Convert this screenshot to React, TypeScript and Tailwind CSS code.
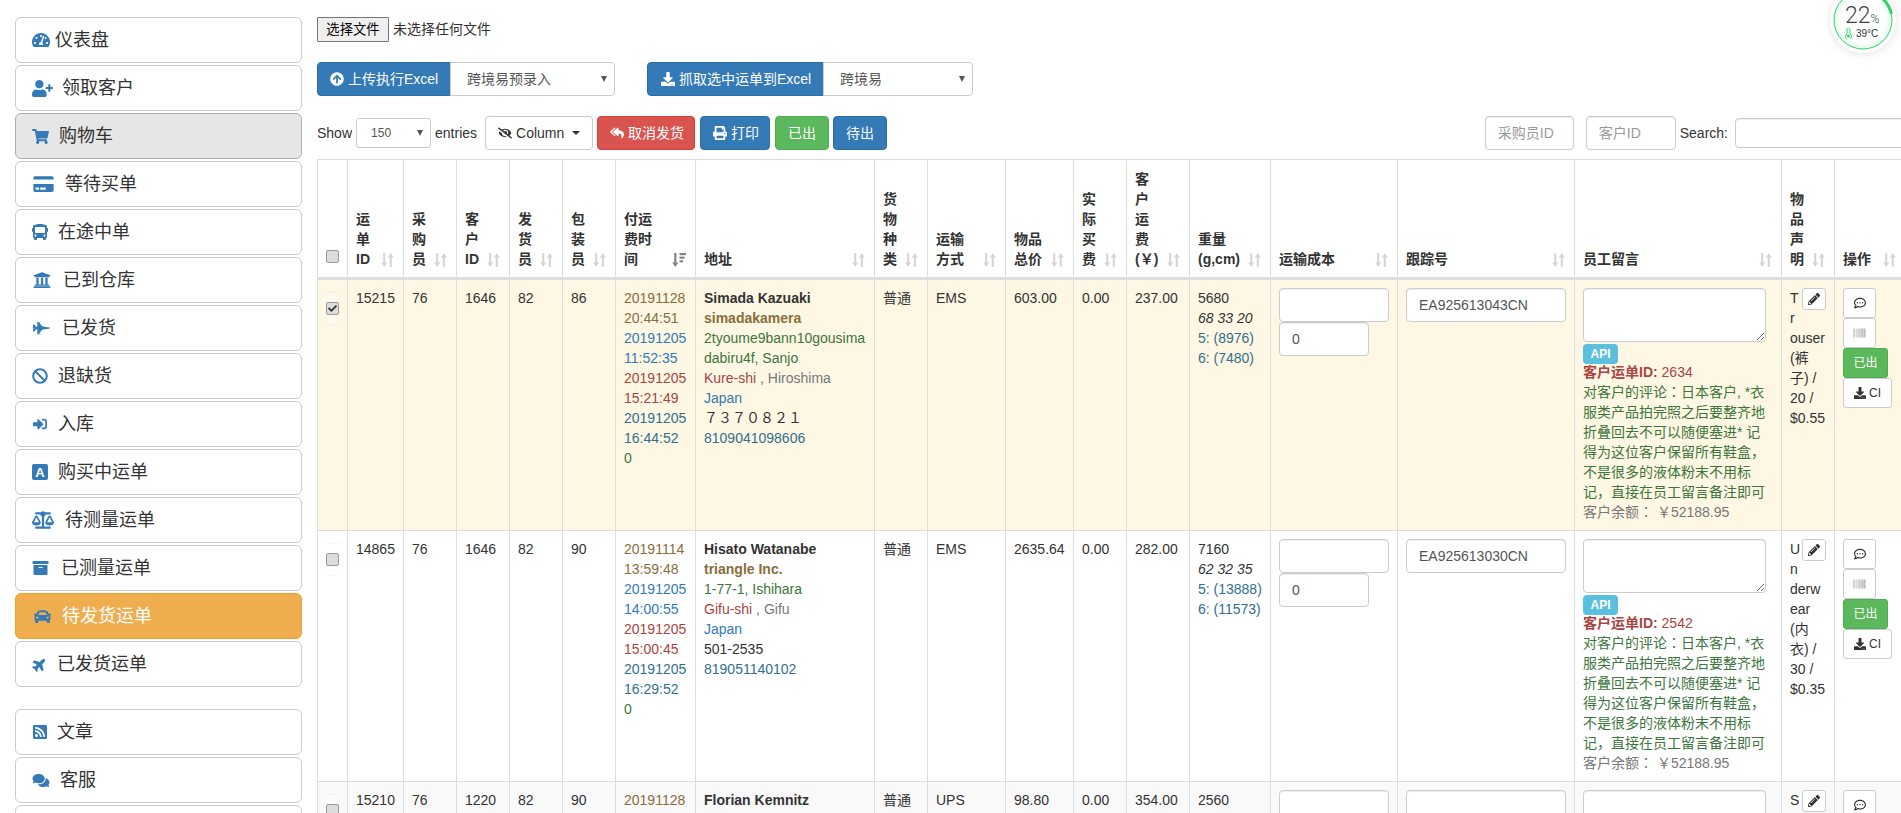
import React from 'react';
import {
  FaArchive, FaArrowCircleUp, FaBalanceScale, FaBan, FaBarcode, FaBus, FaCar, FaCheck, FaComments,
  FaCreditCard, FaDownload, FaEyeSlash, FaFighterJet, FaPencilAlt, FaPlane, FaPrint, FaRegCommentDots,
  FaReplyAll, FaRssSquare, FaShoppingCart, FaSignInAlt, FaTachometerAlt, FaUniversity, FaUserPlus,
} from 'react-icons/fa';

const LetterA: React.FC<{ className?: string }> = ({ className }) => (
  <svg viewBox="0 0 16 16" className={className}>
    <rect x="0" y="0" width="16" height="16" rx="2" fill="currentColor" />
    <text x="8" y="13" textAnchor="middle" fontSize="13" fontWeight="700" fill="#fff">A</text>
  </svg>
);

const menu = [
  { label: '仪表盘', Icon: FaTachometerAlt, size: 'w-[18px] h-[16px]', slot: 'w-[23px]' },
  { label: '领取客户', Icon: FaUserPlus, size: 'w-[21px] h-[17px]', slot: 'w-[30px]' },
  { label: '购物车', Icon: FaShoppingCart, size: 'w-[17px] h-[15px]', slot: 'w-[27px]', active: true },
  { label: '等待买单', Icon: FaCreditCard, size: 'w-[23px] h-[18px]', slot: 'w-[33px]' },
  { label: '在途中单', Icon: FaBus, size: 'w-[16px] h-[18px]', slot: 'w-[26px]' },
  { label: '已到仓库', Icon: FaUniversity, size: 'w-[20px] h-[18px]', slot: 'w-[31px]' },
  { label: '已发货', Icon: FaFighterJet, size: 'w-[19px] h-[14px]', slot: 'w-[30px]' },
  { label: '退缺货', Icon: FaBan, size: 'w-[16px] h-[16px]', slot: 'w-[26px]' },
  { label: '入库', Icon: FaSignInAlt, size: 'w-[16px] h-[14px]', slot: 'w-[26px]' },
  { label: '购买中运单', Icon: LetterA, size: 'w-[16px] h-[16px]', slot: 'w-[26px]' },
  { label: '待测量运单', Icon: FaBalanceScale, size: 'w-[22px] h-[18px]', slot: 'w-[33px]' },
  { label: '已测量运单', Icon: FaArchive, size: 'w-[17px] h-[16px]', slot: 'w-[29px]' },
  { label: '待发货运单', Icon: FaCar, size: 'w-[21px] h-[17px]', slot: 'w-[30px]', warning: true },
  { label: '已发货运单', Icon: FaPlane, size: 'w-[15px] h-[15px] -rotate-45', slot: 'w-[25px]' },
];

const menu2 = [
  { label: '文章', Icon: FaRssSquare, size: 'w-[16px] h-[16px]', slot: 'w-[25px]' },
  { label: '客服', Icon: FaComments, size: 'w-[18px] h-[15px]', slot: 'w-[28px]' },
  { label: '', Icon: null, size: '', slot: '' },
];

type MenuItem = { label: string; Icon: any; size: string; slot: string; active?: boolean; warning?: boolean };

const SideButton: React.FC<{ item: MenuItem }> = ({ item }) => {
  const { Icon } = item;
  return (
    <a
      className={`flex items-center h-[46px] mb-[2px] pl-[16px] border rounded-[6px] text-[18px] ${
        item.warning
          ? 'bg-[#f0ad4e] border-[#eea236] text-white'
          : item.active
          ? 'bg-[#e6e6e6] border-[#adadad] text-[#333]'
          : 'bg-white border-[#ccc] text-[#333]'
      }`}
    >
      {Icon && (
        <span className={`${item.slot} shrink-0 text-[#337ab7]`}>
          <Icon className={`${item.size} block`} />
        </span>
      )}
      {item.label}
    </a>
  );
};

const SelectBox: React.FC<{ text: string; className: string }> = ({ text, className }) => (
  <div className={`relative flex items-center bg-white border border-[#ccc] text-[#555] ${className}`}>
    {text}
    <span className="absolute top-1/2 -translate-y-1/2 right-[7px] border-x-[3px] border-t-[6px] border-x-transparent border-t-[#555]" />
  </div>
);

const btnBase = 'flex items-center h-[34px] border rounded-[4px] text-[14px]';
const blueBtn = `${btnBase} bg-[#337ab7] border-[#2e6da4] text-white`;

const SortIcon: React.FC<{ sorted?: boolean }> = ({ sorted }) => (
  <span className={`absolute right-[9px] bottom-[10px] ${sorted ? 'opacity-60' : 'opacity-20'}`}>
    {sorted ? (
      <svg width="14" height="14" viewBox="0 0 14 14" fill="#333" className="block">
        <path d="M2.2 0h2.2v9.5h2L3.3 14 .2 9.5h2z" />
        <rect x="7.5" y="0" width="6.5" height="2.2" />
        <rect x="7.5" y="3.6" width="5" height="2.2" />
        <rect x="7.5" y="7.2" width="3.4" height="2.2" />
      </svg>
    ) : (
      <svg width="13" height="14" viewBox="0 0 13 14" fill="#333" className="block">
        <path d="M2.2 0h2v9.5h2L3.2 14 .2 9.5h2z" />
        <path d="M8.8 14h2V4.5h2L9.8 0 6.8 4.5h2z" />
      </svg>
    )}
  </span>
);

const colWidths = [
  'w-[30px]', 'w-[56px]', 'w-[53px]', 'w-[53px]', 'w-[53px]', 'w-[53px]', 'w-[80px]', 'w-[179px]', 'w-[53px]', 'w-[78px]',
  'w-[68px]', 'w-[53px]', 'w-[63px]', 'w-[81px]', 'w-[127px]', 'w-[177px]', 'w-[207px]', 'w-[53px]', 'w-[71px]',
];

const headers = [
  '运单ID', '采购员', '客户ID', '发货员', '包装员', '付运费时间', '地址', '货物种类', '运输方式', '物品总价', '实际买费',
  '客户运费(￥)', '重量 (g,cm)', '运输成本', '跟踪号', '员工留言', '物品声明', '操作',
];

const Checkbox: React.FC<{ checked?: boolean; className?: string }> = ({ checked, className }) => (
  <span className={`flex items-center justify-center w-[13px] h-[13px] rounded-[2px] border border-[#9a9a9a] bg-[#dcdcdc] ${className ?? ''}`}>
    {checked && <FaCheck className="w-[9px] h-[9px] text-[#333]" />}
  </span>
);

const RowCheck: React.FC<{ checked?: boolean }> = ({ checked }) => (
  <div className="flex items-center h-[33px] mt-[4px] w-[13px] bg-white/30 border-y border-[#ddd]/30">
    <Checkbox checked={checked} />
  </div>
);

const orders = [
  {
    id: '15215', buyer: '76', customer: '1646', sender: '82', packer: '86', checked: true,
    bg: 'bg-[#fdf7e3]',
    t1: ['20191128', '20:44:51'], t2: ['20191205', '11:52:35'], t3: ['20191205', '15:21:49'], t4: ['20191205', '16:44:52'],
    name: 'Simada Kazuaki', company: 'simadakamera', addr: '2tyoume9bann10gousimadabiru4f, Sanjo',
    city: 'Kure-shi', state: ' , Hiroshima', zip: '７３７０８２１', phone: '8109041098606',
    kind: '普通', ship: 'EMS', total: '603.00', paid: '0.00', fee: '237.00',
    weight: '5680', dims: '68 33 20', w5: '5: (8976)', w6: '6: (7480)',
    track: 'EA925613043CN', cid: '2634', goods: 'Trouser(裤子) / 20 / $0.55',
  },
  {
    id: '14865', buyer: '76', customer: '1646', sender: '82', packer: '90', checked: false,
    bg: 'bg-white',
    t1: ['20191114', '13:59:48'], t2: ['20191205', '14:00:55'], t3: ['20191205', '15:00:45'], t4: ['20191205', '16:29:52'],
    name: 'Hisato Watanabe', company: 'triangle Inc.', addr: '1-77-1, Ishihara',
    city: 'Gifu-shi', state: ' , Gifu', zip: '501-2535', phone: '819051140102',
    kind: '普通', ship: 'EMS', total: '2635.64', paid: '0.00', fee: '282.00',
    weight: '7160', dims: '62 32 35', w5: '5: (13888)', w6: '6: (11573)',
    track: 'EA925613030CN', cid: '2542', goods: 'Underwear(内衣) / 30 / $0.35',
  },
];

const tdCls = 'border border-[#ddd] p-[8px] align-top text-[14px] leading-5 text-[#333]';
const inputCls = 'block h-[34px] bg-white border border-[#ccc] rounded-[4px] px-[12px] text-[14px] text-[#555] shadow-[inset_0_1px_1px_rgba(0,0,0,0.075)] outline-none';

const CenterColon = () => <span className="leading-[0] font-['Noto_Sans_CJK_TC',sans-serif]">：</span>;

const ActionCell: React.FC = () => (
  <td className={tdCls}>
    <div className="flex flex-col items-start text-[12px] leading-[18px]">
      <span className="flex items-center justify-center w-[33px] h-[30px] bg-white border border-[#ccc] rounded-[3px]">
        <FaRegCommentDots className="w-[12px] h-[12px] text-[#333]" />
      </span>
      <span className="flex items-center justify-center w-[33px] h-[30px] bg-white border border-[#ccc] rounded-[3px]">
        <FaBarcode className="w-[13px] h-[12px] text-[#999]" />
      </span>
      <span className="flex items-center justify-center w-[45px] h-[30px] bg-[#5cb85c] border border-[#4cae4c] rounded-[3px] text-white">已出</span>
      <span className="flex items-center justify-center gap-[3px] w-[49px] h-[30px] bg-white border border-[#ccc] rounded-[3px]">
        <FaDownload className="w-[12px] h-[12px] text-[#333]" />CI
      </span>
    </div>
  </td>
);

const OrderRow: React.FC<{ o: (typeof orders)[number] }> = ({ o }) => (
  <tr className={o.bg}>
    <td className={tdCls}><RowCheck checked={o.checked} /></td>
    <td className={tdCls}>{o.id}</td>
    <td className={tdCls}>{o.buyer}</td>
    <td className={tdCls}>{o.customer}</td>
    <td className={tdCls}>{o.sender}</td>
    <td className={tdCls}>{o.packer}</td>
    <td className={tdCls}>
      <div className="text-[#8a6d3b]">{o.t1[0]}<br />{o.t1[1]}</div>
      <div className="text-[#337ab7]">{o.t2[0]}<br />{o.t2[1]}</div>
      <div className="text-[#a94442]">{o.t3[0]}<br />{o.t3[1]}</div>
      <div className="text-[#31708f]">{o.t4[0]}<br />{o.t4[1]}</div>
      <div className="text-[#3c763d]">0</div>
    </td>
    <td className={`${tdCls} break-all`}>
      <div className="font-bold">{o.name}</div>
      <div className="font-bold text-[#8a6d3b]">{o.company}</div>
      <div className="text-[#3c763d]">{o.addr}</div>
      <div className="text-[#777]"><span className="text-[#a94442]">{o.city}</span>{o.state}</div>
      <div className="text-[#337ab7]">Japan</div>
      <div>{o.zip}</div>
      <div className="text-[#31708f]">{o.phone}</div>
    </td>
    <td className={tdCls}>{o.kind}</td>
    <td className={tdCls}>{o.ship}</td>
    <td className={tdCls}>{o.total}</td>
    <td className={tdCls}>{o.paid}</td>
    <td className={tdCls}>{o.fee}</td>
    <td className={tdCls}>
      <div>{o.weight}</div>
      <div className="italic">{o.dims}</div>
      <div className="text-[#31708f]">{o.w5}</div>
      <div className="text-[#31708f]">{o.w6}</div>
    </td>
    <td className={tdCls}>
      <input className={`${inputCls} w-[110px]`} readOnly />
      <input className={`${inputCls} w-[90px]`} value="0" readOnly />
    </td>
    <td className={tdCls}>
      <input className={`${inputCls} w-[160px]`} value={o.track} readOnly />
    </td>
    <td className={tdCls}>
      <textarea className={`${inputCls} w-[183px] !h-[54px] resize-y`} readOnly />
      <div className="h-5 pt-[2px]">
        <span className="flex items-center justify-center w-[35px] h-[20px] rounded-[4px] bg-[#5bc0de] text-white text-[12px] font-bold">API</span>
      </div>
      <div className="text-[#a94442]"><b>客户运单ID:</b> {o.cid}</div>
      <div className="text-[#3c763d]">
        对客户的评论<CenterColon />日本客户, *衣服类产品拍完照之后要整齐地折叠回去不可以随便塞进* 记得为这位客户保留所有鞋盒，不是很多的液体粉末不用标记，直接在员工留言备注即可
      </div>
      <div className="text-[#777]">客户余额<CenterColon /> ￥52188.95</div>
    </td>
    <td className={`${tdCls} break-all`}>
      <span className="float-right flex items-center justify-center w-[24px] h-[22px] bg-white border border-[#ccc] rounded-[3px]">
        <FaPencilAlt className="w-[12px] h-[12px] text-[#333]" />
      </span>
      {o.goods}
    </td>
    <ActionCell />
  </tr>
);

const PartialRow: React.FC = () => (
  <tr className="bg-[#f9f9f9]">
    <td className={tdCls}><RowCheck /></td>
    <td className={tdCls}>15210</td>
    <td className={tdCls}>76</td>
    <td className={tdCls}>1220</td>
    <td className={tdCls}>82</td>
    <td className={tdCls}>90</td>
    <td className={`${tdCls} !text-[#8a6d3b]`}>20191128</td>
    <td className={`${tdCls} font-bold`}>Florian Kemnitz</td>
    <td className={tdCls}>普通</td>
    <td className={tdCls}>UPS</td>
    <td className={tdCls}>98.80</td>
    <td className={tdCls}>0.00</td>
    <td className={tdCls}>354.00</td>
    <td className={tdCls}>2560</td>
    <td className={tdCls}><input className={`${inputCls} w-[110px]`} readOnly /></td>
    <td className={tdCls}><input className={`${inputCls} w-[160px]`} readOnly /></td>
    <td className={tdCls}><textarea className={`${inputCls} w-[183px] !h-[54px]`} readOnly /></td>
    <td className={`${tdCls} break-all`}>
      <span className="float-right flex items-center justify-center w-[24px] h-[22px] bg-white border border-[#ccc] rounded-[3px]">
        <FaPencilAlt className="w-[12px] h-[12px] text-[#333]" />
      </span>
      S
    </td>
    <td className={tdCls}>
      <span className="flex items-center justify-center w-[33px] h-[30px] bg-white border border-[#ccc] rounded-[3px]">
        <FaRegCommentDots className="w-[12px] h-[12px] text-[#333]" />
      </span>
    </td>
  </tr>
);

// cpu gauge overlay in the top right corner
const Gauge: React.FC = () => (
  <div className="absolute right-[5px] top-[-13px] w-[66px] h-[66px] rounded-full bg-white shadow-[0_1px_8px_rgba(0,0,0,0.12)]">
    <svg width="66" height="66" viewBox="0 0 66 66" className="absolute inset-0">
      <defs>
        <radialGradient id="gaugeFill">
          <stop offset="75%" stopColor="#fff" />
          <stop offset="100%" stopColor="#e3f8ea" />
        </radialGradient>
      </defs>
      <circle cx="33" cy="33" r="29" fill="url(#gaugeFill)" stroke="#2fd36c" strokeWidth="1" />
      <path d="M33 4 A29 29 0 0 1 61.4 27" fill="none" stroke="#2fd36c" strokeWidth="3" />
    </svg>
    <div className="absolute left-[15px] top-[17px] flex items-baseline text-[#444] leading-none font-['Roboto',sans-serif]">
      <span className="text-[23px] font-light">22</span>
      <span className="text-[12px] font-light">%</span>
    </div>
    <div className="absolute left-[15px] top-[41px] flex items-center gap-[4px] text-[10px] leading-none text-[#333]">
      <svg width="7" height="11" viewBox="0 0 7 11" className="block">
        <path d="M2 1.5a1.5 1.5 0 0 1 3 0V6a3 3 0 1 1-3 0z" fill="none" stroke="#2fd36c" strokeWidth="1" />
        <circle cx="3.5" cy="8" r="1.5" fill="#2fd36c" />
      </svg>
      39°C
    </div>
  </div>
);

const App: React.FC = () => {
  return (
    <div className="relative flex w-screen h-screen overflow-hidden bg-white text-[14px] text-[#333] font-['Liberation_Sans','Noto_Sans_CJK_SC',sans-serif]">
      {/* Sidebar */}
      <aside className="w-[317px] shrink-0 pl-[15px] pr-[15px] pt-[17px]">
        {menu.map(item => <SideButton key={item.label} item={item} />)}
        <div className="h-[20px]" />
        {menu2.map(item => <SideButton key={item.label || 'more'} item={item} />)}
      </aside>

      <main className="flex-1 min-w-0 pt-[17px]">
        {/* File picker */}
        <div className="flex items-center h-[25px] gap-[4px]">
          <span className="flex items-center justify-center w-[72px] h-[25px] bg-[#efefef] border border-[#767676] rounded-[1px] text-[13.33px] text-black">选择文件</span>
          <span className="text-[#333]">未选择任何文件</span>
        </div>

        {/* Excel actions */}
        <div className="flex mt-[20px] h-[34px]">
          <button className={`${blueBtn} w-[134px] pl-[12px] rounded-r-none gap-[4px]`}>
            <FaArrowCircleUp className="w-[14px] h-[14px]" />上传执行Excel
          </button>
          <SelectBox text="跨境易预录入" className="w-[165px] h-[34px] pl-[16px] rounded-r-[4px] -ml-px" />
          <button className={`${blueBtn} w-[177px] pl-[13px] ml-[32px] rounded-r-none gap-[4px]`}>
            <FaDownload className="w-[14px] h-[14px]" />抓取选中运单到Excel
          </button>
          <SelectBox text="跨境易" className="w-[150px] h-[34px] pl-[16px] rounded-r-[4px] -ml-px" />
        </div>

        {/* Table tools */}
        <div className="flex items-center mt-[20px] h-[34px] w-[1608px]">
          <span>Show</span>
          <SelectBox text="150" className="w-[75px] h-[30px] pl-[14px] ml-[4px] rounded-[3px] text-[12px]" />
          <span className="ml-[4px]">entries</span>
          <button className={`${btnBase} w-[108px] ml-[8px] pl-[12px] bg-white border-[#ccc] text-[#333] gap-[4px]`}>
            <FaEyeSlash className="w-[14px] h-[14px]" />Column
            <span className="ml-[4px] border-x-[4px] border-t-[4px] border-x-transparent border-t-[#333]" />
          </button>
          <button className={`${btnBase} w-[98px] ml-[4px] pl-[12px] gap-[4px] bg-[#d9534f] border-[#d43f3a] text-white`}>
            <FaReplyAll className="w-[14px] h-[14px]" />取消发货
          </button>
          <button className={`${blueBtn} w-[70px] ml-[5px] pl-[12px] gap-[4px]`}>
            <FaPrint className="w-[14px] h-[14px]" />打印
          </button>
          <button className={`${btnBase} w-[54px] ml-[5px] justify-center bg-[#5cb85c] border-[#4cae4c] text-white`}>已出</button>
          <button className={`${blueBtn} w-[54px] ml-[4px] justify-center`}>待出</button>

          <input placeholder="采购员ID" className={`${inputCls} w-[89px] ml-auto placeholder:text-[#999]`} readOnly />
          <input placeholder="客户ID" className={`${inputCls} w-[90px] ml-[12px] placeholder:text-[#999]`} readOnly />
          <span className="ml-[4px]">Search:</span>
          <input className={`${inputCls} !h-[30px] w-[190px] ml-[7px] rounded-[3px]`} readOnly />
        </div>

        {/* Orders */}
        <table className="table-fixed border-collapse w-[1588px] mt-[9px]">
          <colgroup>
            {colWidths.map((w, i) => <col key={i} className={w} />)}
          </colgroup>
          <thead>
            <tr>
              <th className="border border-[#ddd] border-b-[3px] p-[8px] pt-[9px] align-bottom">
                <Checkbox className="mb-[6px]" />
              </th>
              {headers.map((h, i) => (
                <th key={h} className="relative border border-[#ddd] border-b-[3px] pl-[8px] pr-[30px] pt-[9px] pb-[8px] align-bottom text-left text-[14px] leading-5 font-bold text-[#333]">
                  {h}
                  <SortIcon sorted={i === 5} />
                </th>
              ))}
            </tr>
          </thead>
          <tbody>
            {orders.map(o => <OrderRow key={o.id} o={o} />)}
            <PartialRow />
          </tbody>
        </table>
      </main>

      <Gauge />
    </div>
  );
};

export default App;
